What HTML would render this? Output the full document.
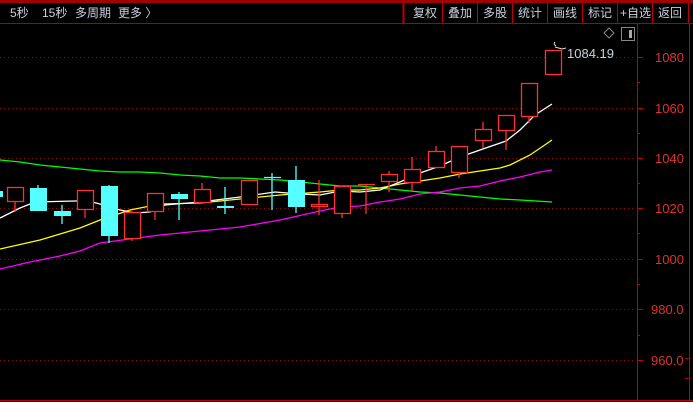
<!DOCTYPE html>
<html><head><meta charset="utf-8"><style>
html,body{margin:0;padding:0;background:#000;width:693px;height:402px;overflow:hidden}
svg{display:block}
text{font-family:"Liberation Sans","Noto Sans CJK SC",sans-serif}
</style></head><body>
<svg width="693" height="402" viewBox="0 0 693 402">
<rect width="693" height="402" fill="#000"/>
<!-- top bar -->
<rect x="0" y="0" width="693" height="3" fill="#a00000"/>
<rect x="0" y="23" width="693" height="1" fill="#b00000"/>
<g font-size="12" fill="#c8d0dc">
<text x="10" y="17">5秒</text>
<text x="42" y="17">15秒</text>
<text x="75" y="17">多周期</text>
<text x="118" y="17">更多 〉</text>
</g>
<g stroke="#c00000" stroke-width="1">
<line x1="403.5" y1="3" x2="403.5" y2="23" stroke-width="2"/>
<line x1="442.5" y1="3" x2="442.5" y2="23"/>
<line x1="477.5" y1="3" x2="477.5" y2="23"/>
<line x1="512.5" y1="3" x2="512.5" y2="23"/>
<line x1="547.5" y1="3" x2="547.5" y2="23"/>
<line x1="582.5" y1="3" x2="582.5" y2="23"/>
<line x1="617.5" y1="3" x2="617.5" y2="23"/>
<line x1="652.5" y1="3" x2="652.5" y2="23"/>
<line x1="688.5" y1="3" x2="688.5" y2="23"/>
</g>
<g font-size="12" fill="#c8d0dc">
<text x="413" y="17">复权</text>
<text x="448" y="17">叠加</text>
<text x="483" y="17">多股</text>
<text x="518" y="17">统计</text>
<text x="553" y="17">画线</text>
<text x="588" y="17">标记</text>
<text x="620" y="17">+自选</text>
<text x="658" y="17">返回</text>
</g>
<!-- grid -->
<g stroke="#8a1010" stroke-width="1" stroke-dasharray="1 3">
<line x1="0" y1="57.5" x2="636" y2="57.5"/>
<line x1="0" y1="108.5" x2="636" y2="108.5"/>
<line x1="0" y1="158.5" x2="636" y2="158.5"/>
<line x1="0" y1="208.5" x2="636" y2="208.5"/>
<line x1="0" y1="259.5" x2="636" y2="259.5"/>
<line x1="0" y1="309.5" x2="636" y2="309.5"/>
<line x1="0" y1="360.5" x2="636" y2="360.5"/>
</g>
<!-- axis -->
<g stroke="#c00000" stroke-width="1">
<line x1="637.5" y1="24" x2="637.5" y2="400"/>
<line x1="689.5" y1="24" x2="689.5" y2="402"/>
<line x1="0" y1="400.5" x2="693" y2="400.5"/>
<line x1="637" y1="57.5" x2="643" y2="57.5"/><line x1="637" y1="108.5" x2="643" y2="108.5"/>
<line x1="637" y1="158.5" x2="643" y2="158.5"/><line x1="637" y1="208.5" x2="643" y2="208.5"/>
<line x1="637" y1="259.5" x2="643" y2="259.5"/><line x1="637" y1="309.5" x2="643" y2="309.5"/>
<line x1="637" y1="360.5" x2="643" y2="360.5"/>
<line x1="637" y1="82.5" x2="640" y2="82.5"/><line x1="637" y1="133.5" x2="640" y2="133.5"/>
<line x1="637" y1="183.5" x2="640" y2="183.5"/><line x1="637" y1="233.5" x2="640" y2="233.5"/>
<line x1="637" y1="284.5" x2="640" y2="284.5"/><line x1="637" y1="335.5" x2="640" y2="335.5"/>
<line x1="685" y1="358.5" x2="689" y2="358.5"/><line x1="685" y1="378.5" x2="689" y2="378.5"/>
</g>
<g font-size="13" fill="#e03030">
<text x="655" y="62">1080</text>
<text x="655" y="113">1060</text>
<text x="655" y="163">1040</text>
<text x="655" y="213">1020</text>
<text x="655" y="264">1000</text>
<text x="651" y="314">980.0</text>
<text x="651" y="365">960.0</text>
</g>
<!-- icons -->
<path d="M609 28 L614 33 L609 38 L604 33 Z" fill="none" stroke="#888" stroke-width="1"/>
<rect x="621.5" y="27.5" width="13" height="13" fill="none" stroke="#888"/>
<rect x="629" y="30" width="3" height="8" fill="#aaa"/>
<!-- MA lines -->
<polyline fill="none" stroke="#00ff00" stroke-width="1.3" points="0,160 20,162 40,165 60,167 80,169 100,171 120,172 140,172 160,173 180,175 200,176 220,178 240,178 260,179 280,180 300,182 320,184 340,186 360,186 380,188 400,190 420,192 440,193 460,195 480,197 500,199 520,200 552,202"/>
<polyline fill="none" stroke="#ff00ff" stroke-width="1.3" points="0,269 30,262 60,256 80,251 100,243 130,239 160,235 200,231 240,227 280,220 320,211 340,207 360,206 380,202 400,199 420,194 440,192 460,188 480,186 500,181 520,177 540,172 552,170"/>
<polyline fill="none" stroke="#ffff00" stroke-width="1.3" points="0,249 40,240 80,228 100,220 130,210 160,204 200,203 240,199 280,195 320,192 340,190 360,190 380,188 400,184 420,181 440,178 460,174 480,171 500,168 510,165 530,155 552,140"/>
<polyline fill="none" stroke="#ffffff" stroke-width="1.3" points="0,218 20,208 35,202 75,201 88,201 100,204 120,210 135,213 150,212 165,205 200,202 240,197 275,192 300,194 320,195 340,191 360,192 380,190 400,182 420,173 440,166 460,157 480,150 506,141 520,130 535,115 552,104"/>
<!-- candles -->
<g stroke="#ff3030" stroke-width="1.3" fill="none">
<line x1="15" y1="201" x2="15" y2="212"/><rect x="7.5" y="187.5" width="16" height="14" fill="#000"/>
<line x1="85" y1="209" x2="85" y2="218"/><rect x="77.5" y="190.5" width="16" height="19" fill="#000"/>
<line x1="132" y1="238" x2="132" y2="241"/><rect x="124.5" y="212.5" width="16" height="26" fill="#000"/>
<line x1="155" y1="211" x2="155" y2="220"/><rect x="147.5" y="193.5" width="16" height="18" fill="#000"/>
<line x1="202" y1="183" x2="202" y2="189"/><rect x="194.5" y="189.5" width="16" height="13" fill="#000"/>
<rect x="241.5" y="180.5" width="16" height="24" fill="#000"/>
<line x1="319" y1="180" x2="319" y2="215"/><rect x="311.5" y="204.5" width="16" height="2" fill="#000"/>
<line x1="342" y1="213" x2="342" y2="218"/><rect x="334.5" y="186.5" width="16" height="27" fill="#000"/>
<line x1="366" y1="184" x2="366" y2="214"/><line x1="358" y1="184.5" x2="375" y2="184.5"/>
<line x1="389" y1="171" x2="389" y2="192"/><rect x="381.5" y="174.5" width="16" height="7" fill="#000"/>
<line x1="412" y1="157" x2="412" y2="192"/><rect x="404.5" y="169.5" width="16" height="13" fill="#000"/>
<line x1="436" y1="146" x2="436" y2="151"/><rect x="428.5" y="151.5" width="16" height="16" fill="#000"/>
<line x1="459" y1="172" x2="459" y2="178"/><rect x="451.5" y="146.5" width="16" height="26" fill="#000"/>
<line x1="483" y1="122" x2="483" y2="148"/><rect x="475.5" y="129.5" width="16" height="11" fill="#000"/>
<line x1="506" y1="130" x2="506" y2="150"/><rect x="498.5" y="115.5" width="16" height="15" fill="#000"/>
<line x1="529" y1="116" x2="529" y2="123"/><rect x="521.5" y="83.5" width="16" height="33" fill="#000"/>
<rect x="545.5" y="50.5" width="16" height="24" fill="#000"/>
</g>
<g fill="#55ffff" stroke="#55ffff" stroke-width="1.3">
<rect x="0" y="191" width="3" height="6" stroke="none"/>
<line x1="38" y1="185" x2="38" y2="188"/><rect x="30" y="188" width="17" height="23" stroke="none"/>
<line x1="62" y1="205" x2="62" y2="224"/><rect x="54" y="211" width="17" height="5" stroke="none"/>
<line x1="109" y1="185" x2="109" y2="243"/><rect x="101" y="186" width="17" height="50" stroke="none"/>
<line x1="179" y1="192" x2="179" y2="220"/><rect x="171" y="194" width="17" height="5" stroke="none"/>
<line x1="225" y1="187" x2="225" y2="214"/><rect x="217" y="206" width="17" height="2" stroke="none"/>
<line x1="272" y1="173" x2="272" y2="210"/><line x1="264" y1="177.5" x2="281" y2="177.5"/>
<line x1="296" y1="166" x2="296" y2="213"/><rect x="288" y="180" width="17" height="27" stroke="none"/>
</g>
<!-- last price -->
<path d="M556 46 Q553 44 555 42 M555 47 L562 49 L566 48" fill="none" stroke="#ddd" stroke-width="1"/>
<text x="567" y="58" font-size="13" fill="#c8d0dc">1084.19</text>
</svg>
</body></html>
